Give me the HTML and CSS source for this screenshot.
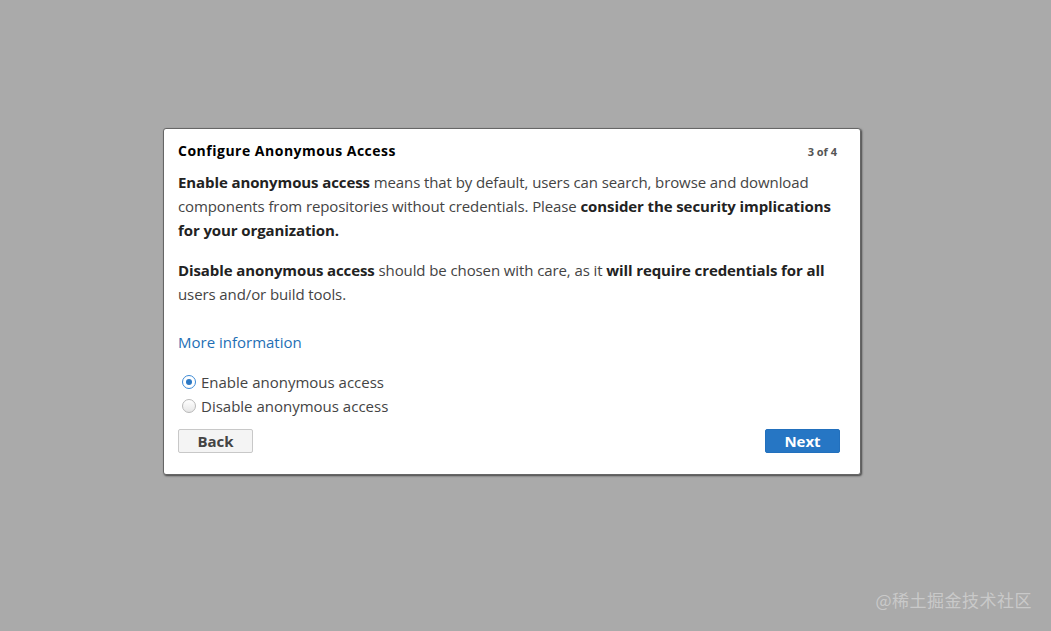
FILE: index.html
```html
<!DOCTYPE html>
<html>
<head>
<meta charset="utf-8">
<link rel="stylesheet" href="styles.css">
</head>
<body>
<div class="page">
  <div class="dialog">
    <div class="header">
      <div class="title">Configure Anonymous Access</div>
      <div class="step">3 of 4</div>
    </div>
    <p class="para"><b>Enable anonymous access</b> means that by default, users can search, browse and download components from repositories without credentials. Please <b>consider the security implications for your organization.</b></p>
    <p class="para"><b>Disable anonymous access</b> should be chosen with care, as it <b>will require credentials for all</b> users and/or build tools.</p>
    <a class="more" href="#">More information</a>
    <div class="options">
      <label class="option"><span class="radio checked"></span>Enable anonymous access</label>
      <label class="option"><span class="radio"></span>Disable anonymous access</label>
    </div>
    <div class="buttons">
      <button class="btn back">Back</button>
      <button class="btn next">Next</button>
    </div>
  </div>
</div>
<div class="watermark">@稀土掘金技术社区</div>
</body>
</html>
```
FILE: styles.css
```css
html, body {
  margin: 0;
  padding: 0;
  background: #aaaaaa;
  height: 100%;
  overflow: hidden;
}
body {
  font-family: "Open Sans", "Lato", sans-serif;
  position: relative;
}
.page {
  padding-top: 128px;
  padding-left: 163px;
}
.dialog {
  box-sizing: border-box;
  width: 698px;
  background: #fff;
  border: 1px solid #666;
  border-radius: 3px;
  box-shadow: 1px 1px 2px rgba(0,0,0,0.6);
  padding: 12px 20px 21px 14px;
}
.header {
  display: flex;
  justify-content: space-between;
  align-items: baseline;
  height: 20px;
  line-height: 20px;
  margin-bottom: 9px;
}
.title {
  font-size: 14px;
  font-weight: 700;
  color: #000;
  letter-spacing: 0.5px;
}
.step {
  font-size: 11px;
  font-weight: 700;
  color: #555;
  margin-right: 3px;
}
.para {
  margin: 0 0 16px 0;
  font-size: 15px;
  line-height: 24px;
  color: #444;
  letter-spacing: -0.1px;
}
.para b {
  color: #222;
  font-weight: 700;
}
.more {
  display: block;
  font-size: 15px;
  line-height: 24px;
  color: #1f6fb5;
  text-decoration: none;
  margin-top: 24px;
  margin-bottom: 16px;
}
.options {
  display: flex;
  flex-direction: column;
  padding-left: 4px;
}
.option {
  display: flex;
  align-items: center;
  font-size: 15px;
  line-height: 24px;
  color: #444;
}
.radio {
  width: 12px;
  height: 12px;
  border-radius: 50%;
  border: 1px solid #b8b8b8;
  background: linear-gradient(#fff, #e6e6e6);
  margin-right: 5px;
  position: relative;
  flex: none;
}
.radio.checked {
  border-color: #3c8ad6;
  background: #fff;
}
.radio.checked::after {
  content: "";
  position: absolute;
  left: 3px;
  top: 3px;
  width: 6px;
  height: 6px;
  border-radius: 50%;
  background: #2b78c4;
}
.buttons {
  display: flex;
  justify-content: space-between;
  margin-top: 11px;
}
.btn {
  width: 75px;
  height: 24px;
  font-family: inherit;
  font-size: 15px;
  font-weight: 700;
  border-radius: 2px;
  padding: 0;
  line-height: 22px;
}
.back {
  background: #f4f4f4;
  border: 1px solid #c8c8c8;
  color: #444;
}
.next {
  background: #2676c4;
  border: 1px solid #2270bd;
  color: #fff;
}
.watermark {
  position: absolute;
  right: 19px;
  bottom: 19px;
  font-family: "Noto Sans CJK SC", sans-serif;
  font-size: 17px;
  color: #c9c9c9;
  letter-spacing: 0.5px;
}
```
